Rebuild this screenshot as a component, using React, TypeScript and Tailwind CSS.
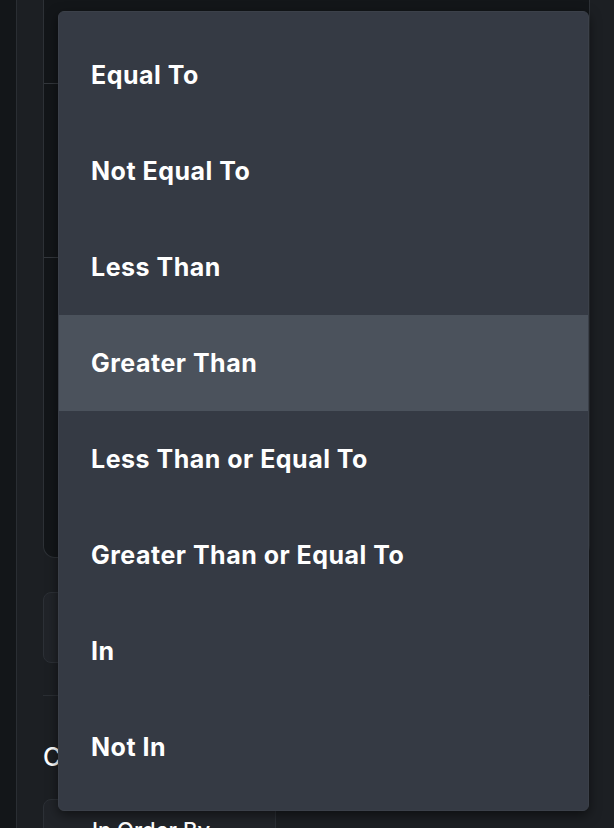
const options = [
  "Equal To",
  "Not Equal To",
  "Less Than",
  "Greater Than",
  "Less Than or Equal To",
  "Greater Than or Equal To",
  "In",
  "Not In",
];

export default function App() {
  const active = "Greater Than";

  return (
    <div
      className="relative h-[828px] w-[614px] overflow-hidden bg-[#131619] text-white"
      style={{ fontFamily: "Inter, 'Noto Sans', sans-serif" }}
    >
      {/* side panel behind the menu */}
      <div className="ml-[16px] flex h-full flex-col border-l border-[#2a2e33] bg-[#1c1f23] pl-[26px] pr-[24px]">
        <div className="-mt-4 flex h-[574px] shrink-0 flex-col rounded-b-xl border border-t-0 border-[#2d3136] bg-[#131619]">
          <div className="h-[100px] shrink-0 border-b border-[#33373c]" />
          <div className="h-[174px] shrink-0 border-b border-[#33373c]" />
          <div className="flex-1" />
        </div>
        <div className="mt-[34px] h-[71px] w-[240px] shrink-0 rounded-lg border border-[#2c3036] bg-[#212429]" />
        <div className="mt-[32px] h-px shrink-0 bg-[#2a2e33]" />
        <div className="mt-[48px] shrink-0 text-[25px] font-medium leading-[26px]">Condition</div>
        <div className="mt-[29px] h-[80px] w-[233px] shrink-0 rounded-lg border border-[#2c3036] bg-[#212429] px-[48px] pt-[14px] text-[22px] font-medium">
          In Order By
        </div>
      </div>

      {/* dropdown menu */}
      <div className="absolute left-[58px] top-[11px] w-[531px] rounded-md border border-[#3b4049] bg-[#353a44] py-[15px] shadow-[0_4px_12px_rgba(0,0,0,0.5)]">
        {options.map((o) => (
          <div
            key={o}
            className={`flex h-[96px] items-center pl-[32px] pt-[2px] text-[25px] font-bold tracking-[0.02em] ${
              o === active ? "bg-[#4b525c]" : ""
            }`}
          >
            {o}
          </div>
        ))}
      </div>
    </div>
  );
}
